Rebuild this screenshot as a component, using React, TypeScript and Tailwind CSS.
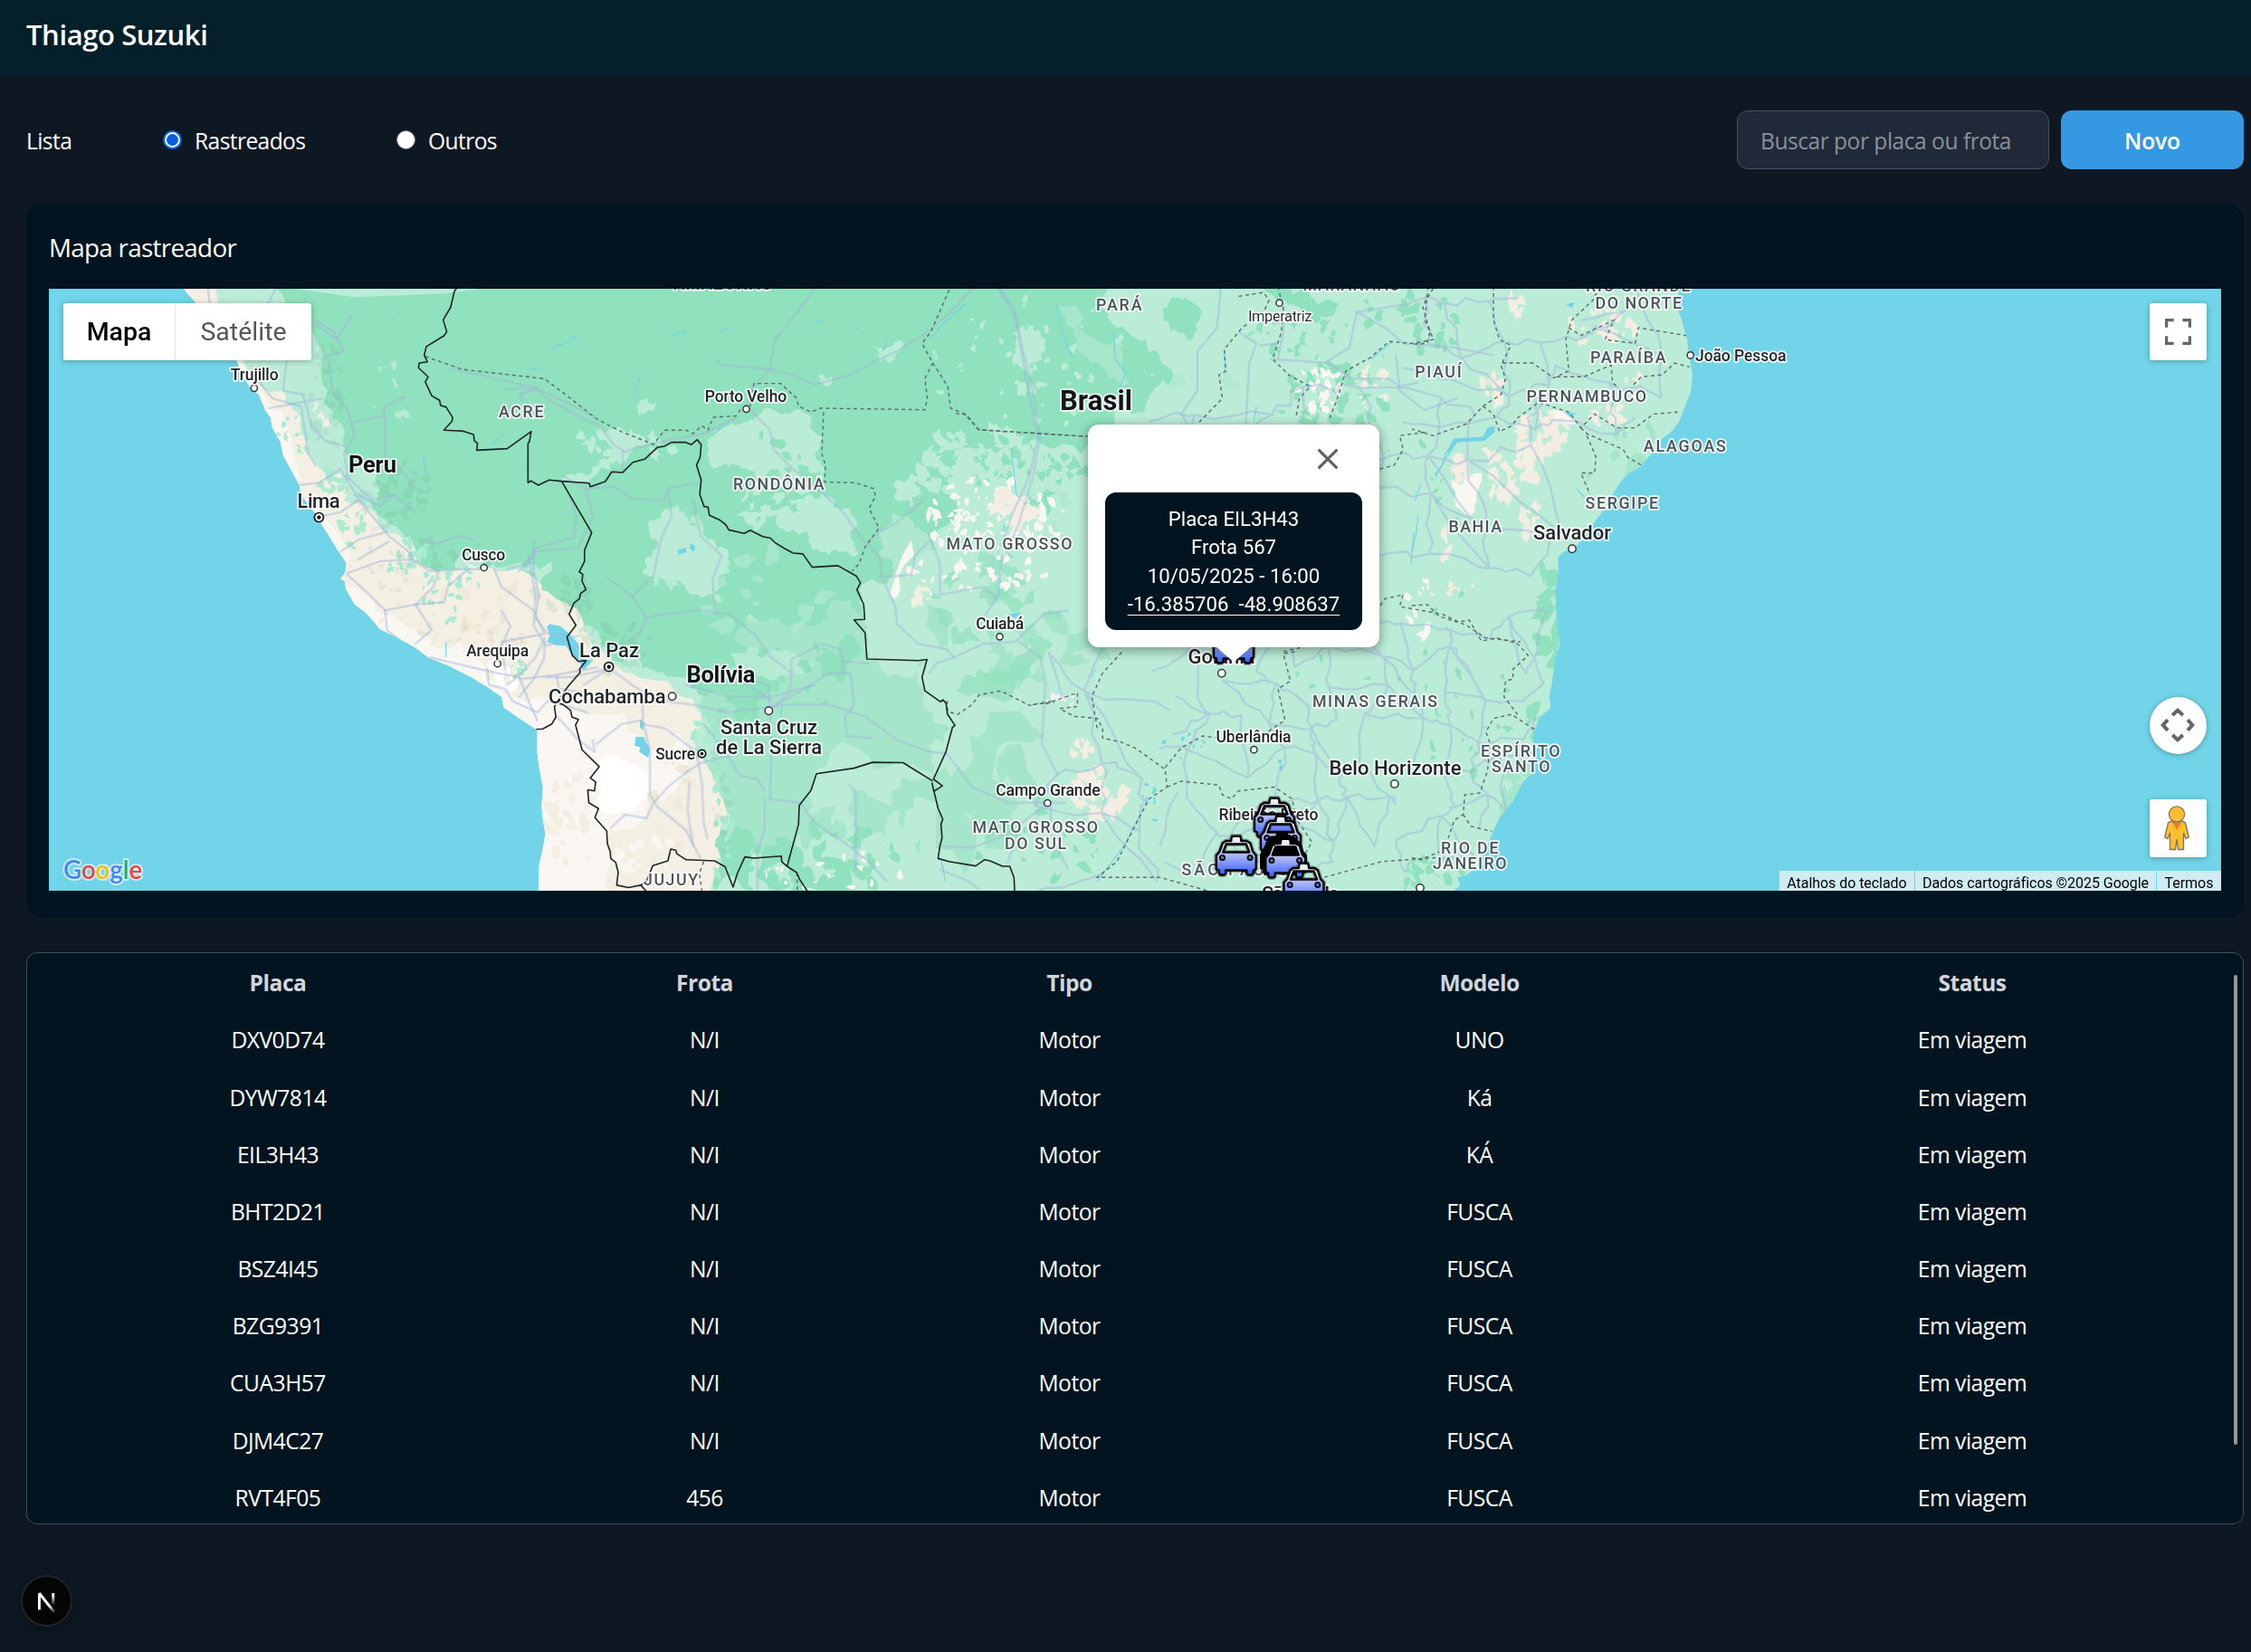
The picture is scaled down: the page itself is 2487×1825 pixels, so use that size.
import React from "react";

/* ---------- deterministic terrain helpers ---------- */

function rng(seed: number) {
  let s = seed * 7919 + 17;
  return () => {
    s = (s * 1664525 + 1013904223) % 4294967296;
    return s / 4294967296;
  };
}

/** Irregular patches scattered in an ellipse. */
function patches(cx: number, cy: number, rx: number, ry: number, n: number, size: number, seed: number) {
  const r = rng(seed);
  r();
  let d = "";
  for (let i = 0; i < n; i++) {
    const a = r() * Math.PI * 2;
    const q = Math.sqrt(r());
    const x = cx + Math.cos(a) * rx * q;
    const y = cy + Math.sin(a) * ry * q;
    const s = size * (0.35 + r() * 0.9);
    const k = 7 + Math.floor(r() * 5);
    const tilt = r() * Math.PI;
    for (let j = 0; j < k; j++) {
      const t = (j / k) * Math.PI * 2;
      const m = s * (0.35 + r() * 0.8);
      const px = Math.cos(t) * m;
      const py = Math.sin(t) * m * 0.6;
      const X = x + px * Math.cos(tilt) - py * Math.sin(tilt);
      const Y = y + px * Math.sin(tilt) + py * Math.cos(tilt);
      d += `${j ? "L" : "M"}${X.toFixed(1)} ${Y.toFixed(1)}`;
    }
    d += "Z";
  }
  return d;
}

/** Closed outline whose edges are broken up by midpoint displacement. */
function rough(points: string, seed: number, depth = 3, amp = 0.34) {
  const r = rng(seed);
  r();
  let pts = points.split(" ").map((p) => p.split(",").map(Number));
  for (let k = 0; k < depth; k++) {
    const next: number[][] = [];
    for (let i = 0; i < pts.length; i++) {
      const a = pts[i];
      const b = pts[(i + 1) % pts.length];
      const dx = b[0] - a[0];
      const dy = b[1] - a[1];
      const o = (r() - 0.5) * amp * 2;
      next.push(a);
      const len = Math.hypot(dx, dy);
      const lim = len > 160 ? 160 / len : 1;
      if (len > 10) next.push([(a[0] + b[0]) / 2 - dy * o * lim, (a[1] + b[1]) / 2 + dx * o * lim]);
    }
    pts = next;
  }
  return "M" + pts.map((p) => `${p[0].toFixed(1)} ${p[1].toFixed(1)}`).join("L") + "Z";
}

/** Loose road mesh over a rectangle. */
function mesh(x0: number, y0: number, x1: number, y1: number, step: number, seed: number) {
  const r = rng(seed);
  const cols = Math.floor((x1 - x0) / step) + 1;
  const rows = Math.floor((y1 - y0) / step) + 1;
  const pts: number[][][] = [];
  for (let j = 0; j < rows; j++) {
    const row: number[][] = [];
    for (let i = 0; i < cols; i++) {
      row.push([x0 + i * step + (r() - 0.5) * step * 0.9, y0 + j * step + (r() - 0.5) * step * 0.9]);
    }
    pts.push(row);
  }
  let d = "";
  const link = (a: number[], b: number[]) => {
    d += `M${a[0].toFixed(1)} ${a[1].toFixed(1)}`;
    for (const t of [0.28, 0.52, 0.76]) {
      const mx = a[0] + (b[0] - a[0]) * t + (r() - 0.5) * step * 0.2;
      const my = a[1] + (b[1] - a[1]) * t + (r() - 0.5) * step * 0.2;
      d += `L${mx.toFixed(1)} ${my.toFixed(1)}`;
    }
    d += `L${b[0].toFixed(1)} ${b[1].toFixed(1)}`;
  };
  for (let j = 0; j < rows; j++) {
    for (let i = 0; i < cols; i++) {
      if (i + 1 < cols && r() < 0.72) link(pts[j][i], pts[j][i + 1]);
      if (j + 1 < rows && r() < 0.72) link(pts[j][i], pts[j + 1][i]);
      if (i + 1 < cols && j + 1 < rows && r() < 0.16) link(pts[j][i], pts[j + 1][i + 1]);
    }
  }
  return d;
}

/* Map sheets: each one has its own local grid. */
const SHEET_W = "translate(40 310) scale(0.39541 0.43367)";
const SHEET_C = "translate(560 310) scale(0.39541 0.43367)";
const SHEET_E = "translate(1060 310) scale(0.39541 0.43367)";
const SHEET_X = "translate(1560 310) scale(0.33333 0.43367)";

const LAND_W =
  "414,21 418,30 440,50 470,100 520,170 560,203 575,240 600,275 622,290 640,330 655,350 660,375 682,410 690,445 705,470 735,520 740,545 760,570 790,605 800,625 815,645 845,690 866,718 864,742 850,760 862,765 865,785 890,825 920,845 940,865 960,888 1000,905 1060,935 1095,960 1150,980 1215,1010 1260,1035 1300,1060 1306,1087 1350,1115 1400,1145 1400,1200 1405,1240 1416,1290 1412,1340 1417,1380 1423,1410 1415,1450 1405,1490 1403,1560 1600,1560 1600,15 414,15";
const LAND_X =
  "-20,15 885,15 880,70 892,95 905,130 912,150 918,190 930,240 925,280 905,320 885,360 860,385 830,402 800,435 758,473 715,492 690,515 660,550 640,580 600,620 570,655 540,680 500,692 484,705 486,740 475,790 477,830 480,880 491,922 475,960 465,1020 455,1060 460,1088 425,1112 408,1142 400,1170 402,1220 405,1250 365,1280 335,1325 290,1368 265,1410 250,1440 220,1490 180,1515 150,1520 160,1540 130,1560 -20,1560";

const BORDERS_C = [
  "-137,15 -147,28 -157,68 -178,100 -168,130 -175,140 -225,168 -231,190 -222,207 -245,210 -247,222 -220,245 -228,258 -210,293 -188,305 -185,318 -170,322 -152,348 -153,358 -176,381 -125,383 -93,392 -91,408 -82,414 -84,432 1,428 68,384 63,410 59,415 59,515 67,510 88,521 118,508 153,511 230,516 233,525 275,512 293,487 323,489 352,463 385,455 420,425 440,422 460,412 500,412 515,418 532,405 543,418 540,450 530,470 543,508 539,545 551,575 562,577 566,598 595,610 612,622 620,635 663,644 680,636 715,652 737,656 750,668 775,682 800,694 827,696 853,730 925,726 977,753 988,770 978,787 997,825 1000,863 970,864 1001,897 1006,964 1150,968 1174,965 1160,1010 1168,1045 1212,1073 1218,1068 1227,1076 1231,1104 1252,1133 1245,1138 1227,1200 1192,1270 1217,1287 1193,1301 1188,1280 1205,1345 1210,1355 1218,1372 1213,1385 1216,1420 1210,1440 1205,1472 1235,1480 1310,1491 1335,1475 1350,1478 1385,1492 1405,1492 1417,1520 1419,1560",
  "153,511 237,642 217,687 217,715 202,742 212,748 210,765 221,787 206,797 203,810 187,822 174,850 193,878 168,908 183,955 200,970 222,968 203,990 205,998 170,1035 158,1050 133,1085 137,1112 125,1130 100,1142 80,1143",
  "140,1075 158,1080 178,1095 182,1112 200,1118 192,1132 210,1195 258,1238 233,1267 248,1277 245,1300 226,1297 229,1330 256,1345 246,1368 279,1402 281,1435 289,1455 290,1472 304,1482 311,1507 307,1540 340,1546 374,1540 390,1530 408,1490 450,1478 458,1448 472,1451 475,1460 500,1475 580,1478 610,1493 615,1505 632,1545 645,1508 665,1468 690,1471 767,1466 768,1480 783,1492 815,1385 817,1337 850,1298 865,1256 970,1242 1022,1227 1107,1228 1190,1275",
  "783,1492 810,1508 818,1525 840,1556",
  "374,1540 390,1556",
];

const STATES_C = [
  "-228,193 -125,226 105,250 175,298 250,352 320,385 410,417 440,381 500,381 520,390 545,370 562,381 577,348 640,345 655,325 680,320 690,262 765,262 810,300 815,320 850,335 875,325 1168,329 1175,300 1168,250 1190,210 1160,160 1185,130 1240,15",
  "885,335 880,440 890,470 888,513 975,515 1025,530 1030,550 1012,580 1040,630 1000,680 985,720 965,740",
  "1190,210 1232,270 1240,325 1280,340 1318,380 1620,397",
  "1230,1070 1232,1098 1260,1105 1300,1080 1320,1055 1380,1045 1460,1082 1530,1070",
  "550,1480 538,1510 545,1556",
  "810,1508 812,1556",
];
const STATES_E = [
  "-10,338 20,342 55,380 360,397",
  "240,1078 330,1050 330,1085 280,1090 320,1110 385,1115 400,1140 400,1165 450,1175 490,1190 575,1245 580,1290 530,1320 490,1390 440,1480 385,1520 560,1520 700,1556",
  "205,1080 265,1074",
  "385,1140 370,1060 400,1000 460,940",
  "575,1240 620,1190 680,1160 760,1170 860,1150 910,1120 890,1040 925,1020 905,950 940,945",
  "580,1290 620,1275 725,1285 735,1310 760,1320 780,1300 880,1290 930,1320 940,1370 985,1430 960,1470",
  "890,15 905,70 900,130 875,200 920,240 980,270 950,300 940,350",
  "780,40 850,30 865,50 850,80 790,120 740,175 745,230 725,240 735,300 665,365",
  "1310,15 1300,100 1325,150 1270,160 1200,155 1150,195 1080,230 1060,290 1035,350",
  "1175,480 1215,470 1240,430 1230,395 1310,385",
  "905,945 1000,925 1090,890 1150,860 1190,810 1240,800 1230,830 1350,850 1420,880 1470,910 1568,920",
  "1020,1520 1180,1480 1330,1470",
];
const STATES_X = [
  "270,15 270,100 290,150 328,165 295,215 310,250 295,290 235,320 180,365 70,395 0,378",
  "70,20 35,65 60,130 50,160 0,162",
  "300,210 400,210 470,248 520,230 510,150 530,100 600,50 620,20",
  "235,320 270,340 290,385 330,370 350,350 420,310 520,335 560,375 605,340 680,375 740,375 800,340 880,335",
  "520,120 560,140 670,100 640,150 740,160 750,120 910,140",
  "480,245 570,245 660,215 665,260 680,270",
  "735,265 760,245 830,240 870,210 920,220",
  "560,375 580,390 700,430 715,450 760,470",
  "580,395 610,450 605,490 560,490 590,545",
  "0,828 50,825 90,855 150,870 190,865 230,918 280,910 350,925 385,955 335,990 335,1015 310,1020 305,1060 350,1105",
  "405,1143 330,1105 270,1115 245,1150 260,1180 250,1250 225,1305 175,1310 170,1360 140,1375 120,1420",
  "170,1360 195,1390 265,1403",
  "0,1470 30,1475 90,1455",
];

const ROADS_W = [
  "480,21 485,60 550,80 640,70 670,21",
  "780,100 830,130 860,180 815,190 830,290 870,330 890,395 860,440 870,500 940,560 1000,545",
  "880,90 840,150 780,110",
  "890,360 970,345 975,320 1030,295",
  "975,345 975,450 1010,470 1060,530",
  "615,250 660,300 740,320 760,440 780,470",
  "700,200 690,280 745,290 770,370 810,410 860,420",
  "650,325 740,310 800,300",
  "740,520 790,515 850,480 890,540 960,575 1000,545 1060,590",
  "890,545 930,590 985,650 1040,690 1060,720",
  "800,600 850,590 900,560",
  "850,690 900,660 980,640",
  "870,745 960,715 1050,710 1100,740 1180,735 1240,735",
  "900,710 985,665",
  "870,750 920,790 975,840 980,890 1030,925",
  "975,840 1060,825 1110,780 1125,740",
  "1060,825 1105,890 1060,925",
  "1060,825 1140,820 1150,780 1200,740",
  "1280,735 1300,780 1390,840 1420,900 1300,920 1310,990",
  "1390,660 1390,740 1405,800 1395,860 1430,900 1480,905",
  "1300,840 1325,880 1300,930",
  "1080,660 1120,670 1180,650 1220,660",
  "1100,960 1240,990 1290,1000 1350,1010 1380,1080 1400,1120",
  "1260,990 1265,1030 1310,1040 1330,1070 1400,1100 1430,1070 1540,1100",
  "1350,1015 1450,1005 1568,985",
  "1420,910 1420,960 1390,1015 1350,1060",
  "1350,740 1400,680 1500,655 1510,600 1490,550",
  "1160,225 1240,240 1400,275 1480,310 1568,350",
  "1400,275 1350,290 1360,305",
  "1455,1008 1460,1040 1530,1050",
];
const ROADS_C = [
  "860,21 820,70 750,150 735,225 690,270 670,320",
  "590,205 600,215 730,225 800,240 860,265 960,240 1030,205 1090,180 1170,135 1240,80 1300,21",
  "0,275 80,275 120,305 200,345 260,370 300,420 330,435 430,410 550,390 640,350",
  "325,435 322,480 290,490",
  "680,330 735,380 745,430 800,480 880,540 940,590 985,650 1040,700 1050,760 1085,830 1090,875 1150,925 1230,940 1250,960 1330,925 1420,920 1500,850 1568,840",
  "1380,21 1420,80 1440,170 1470,280 1490,400 1470,500 1430,620 1380,720 1375,800 1330,860",
  "1160,560 1085,620 1040,640 1015,660",
  "1185,660 1140,700 1130,750 1040,755",
  "1185,660 1210,720 1210,800 1330,780 1370,810",
  "160,500 220,530 300,525 350,555 440,560 450,530 530,515",
  "220,530 240,600 200,680 80,690 60,720 0,735",
  "450,530 460,600 430,660 410,750 350,805 280,755",
  "350,805 390,860 440,850 540,840 620,850 690,900 740,960 795,1000 790,1050 740,1090",
  "520,560 540,650 600,700 575,760 580,840",
  "390,860 370,900 340,915",
  "60,700 80,800 75,880 110,930 200,905",
  "290,990 350,1030 400,1060 470,1075 520,1080 610,1100 700,1090 780,1080 900,1080 1000,1110 1090,1170 1180,1200 1230,1205",
  "650,1010 730,1030 735,1090 740,1180 735,1320",
  "735,1090 830,1040 900,1000 960,1000 970,1080 945,1110 950,1160 1020,1165",
  "795,1000 795,965 880,925 935,940 940,1000",
  "735,1320 820,1330 860,1380 940,1430 1010,1480 1060,1530",
  "955,1285 975,1300 975,1500",
  "1010,975 940,970",
  "700,1553 700,1450 720,1400 720,1320",
  "380,1080 380,1120 400,1200 400,1310 420,1340 500,1400 540,1470",
  "380,1130 440,1140 530,1200 545,1280 550,1380 560,1420",
  "290,1395 330,1360 390,1370 410,1330 450,1290 505,1250",
  "250,1180 320,1130 375,1120",
  "140,1110 200,1170 245,1200 240,1170",
  "505,1250 540,1230 620,1210",
  "550,1130 610,1200 650,1260 700,1270 720,1300",
  "110,1010 180,1010 280,990 215,1030",
  "100,920 80,960 30,1010 0,1030",
  "640,1010 740,1070",
  "500,1030 620,1060 740,1060 860,1030",
  "510,1280 505,1350 520,1440",
  "1230,1205 1300,1290 1400,1330 1560,1330",
  "1250,960 1200,975 1180,1000",
  "1430,920 1490,960 1505,1020 1495,1180 1540,1260",
  "1500,1340 1440,1380 1400,1480",
  "1520,1340 1520,1410 1568,1500",
  "1210,1440 1300,1445 1400,1410",
  "1210,1500 1290,1530 1320,1553",
];
const ROADS_E = [
  "110,21 155,90 175,190 195,290 220,400 195,500 150,590 110,690",
  "730,21 720,120 665,180 665,280 620,340 640,370",
  "780,130 830,160 810,210 800,370",
  "870,200 960,205 1020,210 1090,170 1110,80 1250,60 1310,40",
  "905,70 905,130 890,200",
  "1110,80 1190,120 1240,160 1380,170 1490,190",
  "1030,210 1100,250 1200,250 1230,270 1280,260",
  "1220,190 1230,280 1300,330 1390,300",
  "840,165 890,160",
];

const WATER_C = [
  "120,875 150,880 175,900 200,925 212,960 200,965 182,955 165,930 140,930 112,920 120,905 112,880",
  "205,962 240,968 215,992 207,985",
  "360,1162 382,1162 400,1195 395,1215 370,1200 372,1188 357,1185",
  "372,1118 384,1125 380,1145 372,1138",
  "478,685 500,680 502,692 480,698",
  "515,668 527,678 522,690 510,682",
  "1400,850 1440,845 1420,860",
];

type Label = [string, number, number, number, number, string];
/* text, left, width, baseline, size, kind */
const LABELS: Label[] = [
  ["Trujillo", 254.7, 53, 420.4, 17.6, "city"],
  ["Cusco", 510.2, 48, 619, 17.6, "city"],
  ["Arequipa", 515.2, 69, 725.2, 17.6, "city"],
  ["Porto Velho", 778.7, 90.5, 443.6, 17.6, "city"],
  ["Sucre", 724.2, 44, 839, 17.6, "city"],
  ["Cuiabá", 1078.2, 53, 695.3, 17.6, "city"],
  ["Campo Grande", 1100.2, 115.5, 879.2, 17.6, "city"],
  ["Uberlândia", 1343.5, 83, 820.2, 17.6, "city"],
  ["Ribeirão Preto", 1346.5, 110, 906.4, 17.6, "city"],
  ["João Pessoa", 1873, 100.5, 399, 17.6, "city"],
  ["Imperatriz", 1379, 70.5, 355, 16.6, "town"],
  ["Lima", 328.5, 47, 561.4, 22, "city"],
  ["La Paz", 640, 66, 726.2, 22, "city"],
  ["Cochabamba", 606, 129.5, 777.4, 22, "city"],
  ["Santa Cruz", 796, 107, 810.7, 22, "city"],
  ["de La Sierra", 791, 117, 832.8, 22, "city"],
  ["Goiânia", 1312.5, 74, 733.2, 22, "city"],
  ["Belo Horizonte", 1468.5, 146, 856.2, 22, "city"],
  ["Salvador", 1694, 86, 596.1, 22, "city"],
  ["São Paulo", 1394, 86, 995, 22, "city"],
  ["Peru", 385, 53, 521.6, 25.5, "country"],
  ["Bolívia", 758.5, 76, 754, 25.5, "country"],
  ["Brasil", 1171, 80, 453, 31, "country"],
  ["ACRE", 551, 49.5, 461.2, 17.8, "state"],
  ["AMAZONAS", 744.5, 107.5, 320.4, 17.8, "state"],
  ["RONDÔNIA", 810, 100.5, 541, 17.8, "state"],
  ["MATO GROSSO", 1045.5, 139, 606.5, 17.8, "state"],
  ["JUJUY", 711, 60, 977.6, 17.8, "state"],
  ["MATO GROSSO", 1074.5, 138.5, 920.4, 17.8, "state"],
  ["DO SUL", 1110, 68, 937.8, 17.8, "state"],
  ["PARÁ", 1211, 50.5, 342.8, 17.8, "state"],
  ["MARANHÃO", 1439.5, 107.5, 320.6, 17.8, "state"],
  ["PIAUÍ", 1563.2, 51.5, 417.4, 17.8, "state"],
  ["BAHIA", 1600.5, 58.5, 588, 17.8, "state"],
  ["MINAS GERAIS", 1450, 138, 781, 17.8, "state"],
  ["SÃO PAULO", 1305.5, 118.5, 967.3, 17.8, "state"],
  ["RIO GRANDE", 1752, 115.5, 322, 17.8, "state"],
  ["DO NORTE", 1762.5, 95.5, 340.8, 17.8, "state"],
  ["PARAÍBA", 1757, 83.5, 401.4, 17.8, "state"],
  ["PERNAMBUCO", 1686.5, 132.5, 444, 17.8, "state"],
  ["ALAGOAS", 1815.8, 91, 499.4, 17.8, "state"],
  ["SERGIPE", 1751.5, 80.5, 562.4, 17.8, "state"],
  ["ESPÍRITO", 1636, 87.5, 836.4, 17.8, "state"],
  ["SANTO", 1648, 64.5, 853.4, 17.8, "state"],
  ["RIO DE", 1592, 63.5, 942.6, 17.8, "state"],
  ["JANEIRO", 1583, 81.5, 960.4, 17.8, "state"],
];

const LABEL_CLASS: Record<string, string> = {
  city: "fill-[#1f2226] font-medium",
  town: "fill-[#2b2e32] font-normal",
  country: "fill-[#121417] font-bold",
  state: "fill-[#4b5358] font-medium",
};

const DOTS: [number, number, number][] = [
  [280.8, 428.8, 3.6], [534.7, 627, 3.6], [549.7, 733.2, 3.6], [824.5, 451.8, 3.6],
  [742.7, 769.2, 4.2], [849.4, 785.3, 4.2], [1104.5, 703.3, 3.6], [1157.3, 887.2, 3.6],
  [1413.5, 334.7, 3.6], [1349.8, 743.7, 4.2], [1385.4, 828.2, 3.6], [1540.8, 866, 4.2],
  [1867.7, 392.4, 3.6], [1737, 606.2, 4.2], [1569, 981, 4.2],
];
const CAPITALS: [number, number, number][] = [[352.4, 571.5, 5], [672.7, 736.7, 5], [775.5, 832.6, 4.2]];

function Lines({ list, ...rest }: { list: string[] } & React.SVGProps<SVGPolylineElement>) {
  return (
    <>
      {list.map((p, i) => (
        <polyline key={i} points={p} fill="none" vectorEffect="non-scaling-stroke" {...rest} />
      ))}
    </>
  );
}

const CAR_BODY =
  "M19 5 L20 1.8 H29 L30 5 V7 H36 L40 9.5 L43 19 L46.5 23 V38 L43.5 39.5 V42.5 L42 44.5 H37.5 L36 42.5 V39.5 H13 V42.5 L11.5 44.5 H7 L5.5 42.5 V39.5 L2.5 38 V23 L6 19 L9.5 9.5 L13 7 H19 Z";
const CAR_GLASS = "M13.5 10.5 H35.5 L39 19.5 H10 Z";

function Car({ x, y, glass, solid }: { x: number; y: number; glass?: boolean; solid?: boolean }) {
  if (solid)
    return <path transform={`translate(${x} ${y})`} d={CAR_BODY} fill="#000" stroke="#000" strokeWidth="3" strokeLinejoin="round" />;
  return (
    <g transform={`translate(${x} ${y})`}>
      <path d={CAR_BODY + CAR_GLASS} fill="none" stroke="#000" strokeOpacity="0.3" strokeWidth="5" strokeLinejoin="round" />
      <path d={CAR_BODY + CAR_GLASS} fillRule="evenodd" fill="url(#carPaint)" stroke="#000" strokeWidth="2.4" strokeLinejoin="round" />
      {glass && <path d={CAR_GLASS} fill="#000" />}
      <circle cx="9.2" cy="25.5" r="2.6" fill="#5b73b8" stroke="#000" strokeWidth="1.8" />
      <circle cx="39.8" cy="25.5" r="2.6" fill="#5b73b8" stroke="#000" strokeWidth="1.8" />
    </g>
  );
}

function MapCanvas() {
  return (
    <svg viewBox="54 319 2400 665" className="block h-full w-full" fontFamily="Roboto, sans-serif">
      <defs>
        <linearGradient id="carPaint" x1="0" y1="0" x2="0" y2="1">
          <stop offset="0" stopColor="#fbfaff" />
          <stop offset="0.4" stopColor="#c3c8f3" />
          <stop offset="0.75" stopColor="#6f8bf8" />
          <stop offset="1" stopColor="#2f5df0" />
        </linearGradient>
        <clipPath id="land">
          <polygon points={LAND_W} transform={SHEET_W} />
          <rect x="640" y="300" width="940" height="700" />
          <polygon points={LAND_X} transform={SHEET_X} />
        </clipPath>
      </defs>
      <rect x="54" y="319" width="2400" height="665" fill="#72d4e9" />
      <g clipPath="url(#land)">
        <rect x="54" y="319" width="2400" height="665" fill="#bbecd7" />

        {/* soft vegetation transitions */}
        <g fill="#a5e6ca">
          <path transform={SHEET_C} d={rough("560,860 1000,870 1010,965 1170,970 1165,1050 1240,1140 1190,1260 1100,1225 860,1250 810,1390 780,1480 600,1470 590,1300 560,1120", 19)} />
          <path transform={SHEET_C} d={patches(1000, 1380, 190, 100, 16, 60, 20)} />
          <path transform={SHEET_E} d={patches(60, 1260, 170, 190, 16, 90, 22)} />
          <path transform={SHEET_E} d={patches(160, 900, 260, 120, 16, 60, 23)} />
          <path transform={SHEET_E} d={patches(700, 500, 500, 300, 30, 40, 24)} opacity="0.5" />
          <path transform={SHEET_X} d={patches(700, 440, 160, 110, 16, 40, 25)} />
          <path transform={SHEET_X} d={patches(370, 1300, 60, 90, 12, 36, 27)} />
        </g>

        {/* rain forest */}
        <g transform={SHEET_W} fill="#90e1bd">
          <path d={rough("640,10 700,70 760,120 800,200 790,290 830,350 860,430 870,480 920,560 960,600 1020,640 1050,690 1100,740 1170,735 1220,690 1290,700 1340,730 1420,760 1500,800 1620,900 1640,0", 1, 2, 0.25)} />
        </g>
        <g transform={SHEET_C} fill="#90e1bd">
          <path d={rough("-60,0 1700,0 1700,140 1700,400 1500,420 1400,400 1330,420 1240,450 1220,520 1260,600 1150,700 1020,760 1000,860 900,830 860,880 740,860 640,900 560,1060 470,1010 400,990 330,960 260,930 200,880 170,820 -60,740", 2)} />
          <path d={rough("520,930 640,920 760,1040 700,1080 720,1150 640,1120 560,1060", 3)} />
          <path d={rough("860,960 950,900 990,960 940,1020 880,1010", 4)} />
          <path d={rough("590,1400 680,1400 690,1553 580,1553", 5)} />
          <path d={patches(880, 1480, 230, 80, 45, 40, 5)} />
          <path d={patches(1350, 820, 190, 150, 18, 40, 6)} opacity="0.7" />
        </g>
        <g transform={SHEET_E} fill="#90e1bd">
          <path d={rough("-60,0 320,0 380,40 330,70 360,110 470,130 560,190 590,260 530,300 420,320 330,370 250,380 200,420 100,430 -60,420", 7)} />
          <path d={rough("570,70 620,50 670,100 650,150 590,130", 8)} />
          <path d={rough("-20,1040 60,990 140,1000 230,900 260,930 200,1000 60,1060", 9)} opacity="0.7" />
          <path d={rough("850,21 930,60 1000,110 1060,60 960,21", 10)} />
          <path d={patches(180, 480, 170, 110, 44, 32, 8)} />
          <path d={patches(1050, 120, 240, 90, 26, 20, 9)} />
          <path d={patches(1060, 320, 180, 110, 40, 24, 10)} />
          <path d={patches(1090, 700, 320, 420, 44, 13, 11)} />
          <path d={patches(230, 1440, 190, 90, 16, 22, 12)} />
        </g>
        <g transform={SHEET_X} fill="#90e1bd">
          <path d={patches(450, 860, 40, 150, 18, 38, 13)} />
          <path d={patches(410, 1120, 26, 50, 8, 32, 14)} />
          <path d={patches(180, 1080, 160, 190, 20, 18, 15)} />
          <path d={patches(60, 1510, 110, 40, 18, 22, 16)} />
          <path d={patches(60, 100, 100, 90, 12, 30, 17)} />
        </g>

        {/* clearings in the forest */}
        <g fill="#bbecd7">
          <g transform={SHEET_C}>
            <path d={rough("570,400 640,370 700,345 790,340 850,360 860,440 870,490 780,470 720,500 640,470 560,440", 30)} />
            <path d={rough("640,600 720,570 800,560 880,540 960,580 960,650 980,700 900,700 840,640 760,630", 31)} />
            <path d={rough("400,610 440,580 500,600 560,660 620,700 590,760 600,820 520,800 450,760 380,750 420,680", 32)} />
            <path d={rough("620,950 720,960 800,950 860,980 780,1010 700,1010", 33)} opacity="0.8" />
            <path d={rough("150,500 230,495 290,450 260,400 340,400 420,410 330,450 290,480 230,515", 34)} />
            <path d={rough("1080,520 1130,490 1160,540 1130,580 1090,560", 35)} />
            <path d={rough("1060,625 1120,600 1170,640 1160,720 1080,740 1040,690", 36)} opacity="0.7" />
            <path d={rough("1440,120 1490,130 1470,210 1430,220 1420,160", 37)} />
            <path d={rough("1020,170 1060,172 1110,160 1090,185 1040,205", 38)} />
            <path d={rough("870,240 915,240 900,268 875,260", 39)} />
            <path d={rough("360,320 425,310 410,335 370,345", 40)} />
            <path d={patches(500, 690, 120, 110, 30, 32, 30)} opacity="0.8" />
            <path d={patches(700, 800, 190, 110, 20, 34, 31)} opacity="0.5" />
            <path d={patches(1330, 470, 210, 90, 64, 32, 32)} />
            <path d={patches(750, 480, 140, 110, 30, 28, 33)} />
            <path d={patches(330, 410, 150, 40, 16, 24, 34)} />
            <path d={patches(1350, 240, 220, 160, 14, 14, 35)} />
          </g>
          <g transform={SHEET_E}>
            <path d={rough("280,60 330,70 460,160 480,260 420,250 330,150", 41)} opacity="0.5" />
            <path d={patches(330, 230, 230, 160, 30, 17, 36)} />
            <path d={patches(180, 170, 26, 130, 16, 20, 37)} />
          </g>
          <g transform={SHEET_W}>
            <path d={rough("690,210 760,240 800,320 850,440 830,500 780,470 740,360 700,310", 42)} />
            <path d={rough("955,220 1005,195 1000,230 960,238", 43)} opacity="0.8" />
            <path d={patches(900, 520, 50, 60, 10, 40, 38)} />
            <path d={patches(1340, 745, 100, 20, 12, 34, 39)} />
            <path d={patches(1000, 300, 60, 60, 5, 18, 40)} opacity="0.8" />
          </g>
        </g>
        <g fill="#90e1bd" transform={SHEET_C}>
          <path d={patches(720, 520, 150, 130, 14, 22, 44)} />
          <path d={patches(1400, 440, 150, 60, 16, 18, 45)} />
          <path d={patches(820, 1010, 260, 90, 20, 18, 46)} />
        </g>

        {/* dry highlands */}
        <g transform={SHEET_W} fill="#f3efe3">
          <polygon points="400,10 500,10 510,60 450,60" />
          <path d={rough("300,190 540,190 620,262 690,280 695,310 740,350 750,400 775,460 850,490 860,560 945,590 980,640 1040,655 1060,700 1120,740 1200,720 1290,740 1400,765 1440,800 1510,835 1525,890 1555,930 1605,955 1665,1000 1765,1020 1835,1065 1860,1110 1835,1150 1875,1240 1905,1300 1915,1380 1895,1440 1915,1480 1890,1600 300,1600", 50, 2, 0.22)} />
          <path d={patches(780, 400, 40, 100, 8, 16, 41)} />
        </g>
        <g transform={SHEET_W} fill="#faf7f2">
          <polygon points="500,190 575,200 620,275 660,320 690,340 715,410 725,460 740,510 700,510 600,320" />
          <polygon points="730,520 760,560 800,600 830,630 850,650 880,700 870,722 800,640" />
          <path d={rough("700,755 850,755 900,790 950,840 990,850 1060,890 1110,930 1180,920 1240,970 1260,1020 1320,1040 1370,1075 1440,1060 1500,1090 1480,1130 1400,1145 1300,1190 1000,1010", 51, 2, 0.2)} />
          <path d={patches(1300, 1010, 60, 26, 8, 26, 42)} fill="#fff" />
        </g>
        <g transform={SHEET_C}>
          <path fill="#faf7f2" d={rough("60,1145 110,1130 150,1090 230,1110 330,1100 350,1150 420,1200 430,1280 390,1350 330,1400 280,1400 290,1480 300,1600 60,1600", 52, 2, 0.22)} />
          <path fill="#faf7f2" d={rough("440,1130 500,1170 480,1280 440,1330 400,1300", 53)} />
          <path fill="#ffffff" d={rough("270,1218 300,1210 330,1222 370,1240 395,1275 400,1305 370,1330 345,1355 300,1360 265,1350 245,1330 262,1290 258,1250", 54, 2, 0.2)} />
          <path fill="#f3efe3" d={patches(180, 1380, 70, 150, 26, 24, 43)} />
          <path fill="#efe9d9" d={patches(470, 1350, 80, 130, 16, 22, 44)} />
          <path fill="#efe9d9" d={patches(-100, 850, 260, 90, 18, 22, 45)} />
          <path fill="#faf7f2" d={patches(400, 1480, 100, 60, 14, 26, 46)} />
        </g>
        <g fill="#a9ead0">
          <path transform={SHEET_W} d={patches(1160, 790, 90, 80, 26, 17, 47)} />
          <path transform={SHEET_W} d={patches(720, 370, 50, 100, 14, 13, 48)} />
          <path transform={SHEET_W} d={patches(830, 520, 50, 30, 12, 20, 49)} />
          <path transform={SHEET_W} d={patches(880, 630, 40, 50, 12, 16, 50)} />
          <path transform={SHEET_W} d={patches(980, 750, 60, 30, 7, 11, 51)} />
          <path transform={SHEET_W} d={patches(1340, 985, 36, 24, 6, 13, 52)} />
          <path transform={SHEET_W} d={patches(1060, 700, 60, 40, 12, 20, 57)} />
          <path transform={SHEET_C} d={patches(540, 1150, 40, 80, 16, 16, 53)} />
          <path transform={SHEET_C} d={patches(600, 1400, 30, 140, 20, 18, 54)} />
        </g>
        {/* ridge shading */}
        <g fill="#5f9f86" opacity="0.14">
          <path transform={SHEET_W} d={patches(810, 300, 45, 150, 34, 19, 55)} />
          <path transform={SHEET_W} d={patches(980, 540, 120, 90, 34, 19, 56)} />
          <path transform={SHEET_W} d={patches(1150, 700, 160, 40, 20, 18, 57)} />
          <path transform={SHEET_W} d={patches(1480, 800, 90, 50, 26, 20, 58)} />
          <path transform={SHEET_C} d={patches(300, 930, 110, 70, 34, 19, 59)} />
          <path transform={SHEET_C} d={patches(600, 1270, 30, 190, 26, 14, 60)} />
        </g>
        <g fill="#a89f86" opacity="0.13">
          <path transform={SHEET_W} d={patches(960, 720, 90, 90, 20, 14, 61)} />
          <path transform={SHEET_W} d={patches(1230, 900, 180, 50, 24, 14, 62)} />
        </g>

        {/* bare farmland */}
        <g fill="#faf6f1">
          <path transform={SHEET_C} d={patches(1400, 610, 170, 80, 46, 17, 61)} />
          <path transform={SHEET_C} d={patches(1310, 740, 210, 45, 30, 17, 62)} />
          <polygon transform={SHEET_C} points="1130,660 1138,700 1110,725 1095,750 1100,790 1085,812 1070,800 1090,740 1105,700" />
          <path transform={SHEET_C} d={patches(1190, 600, 18, 60, 5, 16, 68)} />
          <path transform={SHEET_C} d={patches(950, 1510, 230, 50, 18, 16, 63)} />
          <path transform={SHEET_E} d={patches(80, 610, 170, 110, 46, 16, 64)} />
          <path transform={SHEET_E} d={patches(1010, 275, 70, 60, 28, 17, 65)} />
          <path transform={SHEET_E} d={patches(285, 1070, 40, 20, 6, 15, 66)} />
          <path transform={SHEET_E} d={patches(1290, 820, 40, 90, 10, 14, 67)} />
          <path transform={SHEET_X} d={rough("130,510 165,520 180,495 230,490 225,520 215,560 190,600 165,585 145,575 145,540", 69, 2, 0.2)} />
          <polygon transform={SHEET_X} points="455,330 500,332 520,345 550,365 500,368 465,350" />
          <polygon transform={SHEET_X} points="45,870 62,870 60,895 42,918 30,920" />
        </g>
        <g fill="#f4eee2">
          <path transform={SHEET_C} d={patches(1410, 600, 60, 60, 12, 30, 70)} />
          <path transform={SHEET_C} d={patches(1150, 800, 36, 18, 9, 19, 71)} />
          <path transform={SHEET_E} d={patches(150, 590, 45, 60, 12, 26, 72)} />
          <path transform={SHEET_E} d={patches(400, 1300, 80, 65, 30, 26, 73)} />
          <path transform={SHEET_E} d={patches(340, 1190, 40, 25, 8, 20, 74)} />
          <path transform={SHEET_E} d={patches(1150, 280, 50, 60, 12, 20, 75)} />
          <path transform={SHEET_X} d={patches(430, 390, 100, 60, 36, 29, 76)} />
          <path transform={SHEET_X} d={patches(320, 480, 100, 75, 28, 28, 77)} />
          <path transform={SHEET_X} d={patches(265, 275, 40, 32, 9, 28, 78)} />
          <path transform={SHEET_X} d={patches(620, 120, 130, 45, 24, 22, 79)} />
          <path transform={SHEET_X} d={patches(660, 345, 60, 35, 12, 22, 80)} />
          <path transform={SHEET_X} d={patches(390, 600, 40, 50, 10, 26, 81)} />
          <path transform={SHEET_X} d={patches(150, 480, 45, 25, 9, 26, 82)} />
          <path transform={SHEET_X} d={patches(110, 680, 22, 36, 5, 20, 83)} />
          <path transform={SHEET_X} d={patches(340, 60, 22, 36, 6, 24, 84)} />
          <path transform={SHEET_X} d={patches(735, 250, 30, 15, 5, 22, 85)} />
          <path transform={SHEET_X} d={patches(120, 780, 100, 26, 7, 15, 86)} />
        </g>

        {/* lakes and rivers */}
        <g fill="#72d4e9">
          {WATER_C.map((p, i) => (
            <polygon key={i} points={p} transform={SHEET_C} />
          ))}
          <polygon transform={SHEET_X} points="140,402 235,398 250,375 275,370 275,385 240,408 150,412 125,440 112,438" />
          <polygon transform={SHEET_X} points="510,60 540,55 530,70" />
          <polygon transform={SHEET_X} points="505,335 545,338 525,348" />
          <path transform={SHEET_E} d={patches(640, 1180, 70, 40, 9, 10, 90)} />
          <path transform={SHEET_E} d={patches(560, 1330, 60, 60, 10, 9, 91)} />
          <path transform={SHEET_E} d={patches(890, 1230, 20, 14, 4, 9, 92)} />
        </g>
        <g stroke="#72d4e9" strokeWidth="1.2">
          <g transform={SHEET_X}>
            <Lines list={["112,438 100,470 75,495", "30,520 10,560", "20,600 15,640 0,690", "545,530 575,555"]} />
          </g>
          <g transform={SHEET_E}>
            <Lines list={["430,130 435,200 465,235 440,290", "740,185 742,235", "1380,420 1330,500", "1270,640 1262,720", "830,320 822,360", "510,1350 460,1440 385,1530", "270,60 290,140 315,195", "145,430 150,470 160,550", "380,990 370,1010", "1150,200 1210,155"]} />
          </g>
          <g transform={SHEET_C}>
            <Lines list={["1280,60 1220,110 1180,150", "1210,230 1232,270", "355,300 370,250", "460,140 500,130", "120,175 190,150", "600,130 625,120", "860,110 880,100", "1050,180 1065,150", "970,130 985,115", "1385,640 1392,620", "770,1080 765,1110", "1215,1480 1225,1530", "620,360 580,390"]} />
          </g>
          <g transform={SHEET_W}>
            <Lines list={["1270,420 1310,390", "1080,440 1092,500", "1380,225 1420,222", "990,98 1000,96", "1030,320 1040,325", "1490,147 1510,144", "1145,920 1145,960"]} />
          </g>
        </g>

        {/* roads */}
        <g stroke="#9fb4dc" strokeOpacity="0.45" strokeWidth="2.5" strokeLinejoin="round" strokeLinecap="round">
          <g transform={SHEET_W}><Lines list={ROADS_W} /></g>
          <g transform={SHEET_C}><Lines list={ROADS_C} /></g>
          <g transform={SHEET_E}><Lines list={ROADS_E} /></g>
          <path d={mesh(1290, 690, 1720, 990, 38, 3)} fill="none" />
          <path d={mesh(1270, 440, 1730, 680, 62, 4)} fill="none" />
          <path d={mesh(1560, 335, 1860, 470, 44, 9)} fill="none" />
          <path d={mesh(1150, 720, 1280, 980, 62, 6)} fill="none" />
        </g>

        {/* state limits */}
        <g stroke="#5c6a6a" strokeWidth="1.4" strokeDasharray="4 3.6">
          <g transform={SHEET_C}><Lines list={STATES_C} /></g>
          <g transform={SHEET_E}><Lines list={STATES_E} /></g>
          <g transform={SHEET_X}><Lines list={STATES_X} /></g>
        </g>
        {/* national borders */}
        <g transform={SHEET_C} stroke="#1d2426" strokeWidth="1.6" strokeLinejoin="round">
          <Lines list={BORDERS_C} />
        </g>
      </g>

      {DOTS.map(([x, y, r], i) => (
        <circle key={i} cx={x} cy={y} r={r} fill="#fff" stroke="#33383b" strokeWidth="1.5" />
      ))}
      {CAPITALS.map(([x, y, r], i) => (
        <g key={i}>
          <circle cx={x} cy={y} r={r} fill="#fff" stroke="#15181a" strokeWidth="1.7" />
          <circle cx={x} cy={y} r={r * 0.44} fill="#15181a" />
        </g>
      ))}
      {LABELS.map(([t, x, w, y, s, kind], i) => (
        <text
          key={i}
          x={x}
          y={y}
          fontSize={s}
          textLength={w}
          className={LABEL_CLASS[kind]}
          stroke="#ffffff"
          strokeOpacity="0.85"
          strokeWidth="3.6"
          strokeLinejoin="round"
          paintOrder="stroke"
        >
          {t}
        </text>
      ))}

      <Car x={1338.5} y={688} />
      <Car x={1383.5} y={880} />
      <Car x={1390.5} y={900} />
      <Car x={1341.3} y={922} />
      <Car x={1391} y={921} solid />
      <Car x={1392} y={918} solid />
      <Car x={1396} y={922} solid />
      <Car x={1395.8} y={925} glass />
      <Car x={1416} y={952} />
    </svg>
  );
}

function InfoWindow() {
  return (
    <div className="absolute left-[1148px] top-[150px] h-[246px] w-[322px] rounded-[12px] bg-white px-[19px] font-['Roboto',sans-serif] shadow-[0_3px_11px_2px_rgba(0,0,0,0.3)]">
      <div className="flex h-[75px] items-center justify-end pr-[26px]">
        <svg width="24" height="24" viewBox="0 0 24 24" className="block" stroke="#606060" strokeWidth="3">
          <path d="M1.6 1.6 22.4 22.4M22.4 1.6 1.6 22.4" />
        </svg>
      </div>
      <div className="flex h-[152px] flex-col items-center justify-center rounded-[12px] bg-[#02141f] pt-[1px] text-[22.2px] leading-[31.5px] tracking-[0px] text-white">
        <div>Placa EIL3H43</div>
        <div>Frota 567</div>
        <div>10/05/2025 - 16:00</div>
        <div className="whitespace-pre underline decoration-1 underline-offset-[4px]">-16.385706  -48.908637</div>
      </div>
      <svg width="40" height="18" viewBox="0 0 40 18" className="absolute left-[141px] top-[245px]">
        <path d="M0 0H40L20 17.5Z" fill="#fff" />
      </svg>
    </div>
  );
}

function TrackerMap() {
  return (
    <div className="relative h-[665px] w-[2400px] overflow-hidden font-['Roboto',sans-serif] tracking-normal">
      <MapCanvas />
      <InfoWindow />
      <div className="absolute left-4 top-4 flex h-[63px] rounded-[3px] bg-white pt-[2px] text-[28.5px] shadow-[0_1px_6px_rgba(0,0,0,0.3)]">
        <div className="flex w-[124px] items-center justify-center border-r border-[#e6e6e6] font-medium text-black">Mapa</div>
        <div className="flex w-[150px] items-center justify-center text-[#565656]">Satélite</div>
      </div>
      <div className="absolute right-4 top-4 flex h-[63px] w-[63px] items-center justify-center rounded-[3px] bg-white shadow-[0_1px_6px_rgba(0,0,0,0.3)]">
        <svg width="29" height="29" viewBox="0 0 18 18" fill="#666">
          <path d="M0 0v6h2V2h4V0H0zm16 0h-4v2h4v4h2V0h-2zm0 16h-4v2h6v-6h-2v4zM2 12H0v6h6v-2H2v-4z" />
        </svg>
      </div>
      <div className="absolute right-4 top-[451px] flex h-[63px] w-[63px] items-center justify-center rounded-full bg-white shadow-[0_1px_6px_rgba(0,0,0,0.3)]">
        <svg width="38" height="38" viewBox="0 0 38 38" fill="none" stroke="#666" strokeWidth="4" className="-ml-[1px] -mt-[1px]">
          <path d="M13.2 8 19 2.8 24.8 8M13.2 30 19 35.2 24.8 30M8 13.2 2.8 19 8 24.8M30 13.2 35.2 19 30 24.8" />
        </svg>
      </div>
      <div className="absolute right-4 top-[564px] flex h-[64px] w-[63px] items-center justify-center rounded-[3px] bg-white shadow-[0_1px_6px_rgba(0,0,0,0.3)]">
        <svg width="30" height="50" viewBox="0 0 30 50" className="-ml-[3px]">
          <path
            d="M8 17.5H22L24.5 19 28.3 35 25 36.5 22.5 30V48.5H16.5L15 37 13.5 48.5H7.5V30L5 36.5 1.7 35 5.5 19Z"
            fill="#fdbf2d"
            stroke="#7b7464"
            strokeWidth="1.3"
          />
          <path d="M9.5 17.5H20.5L15 27Z" fill="#e58031" />
          <circle cx="15" cy="9.5" r="8.6" fill="#fdbf2d" stroke="#7b7464" strokeWidth="1.3" />
        </svg>
      </div>
      <div className="absolute bottom-0 right-0 flex h-[22px] gap-px overflow-hidden text-[16px] leading-[27px] tracking-[-0.05px] text-black">
        <span className="w-[149px] bg-[#d0ebf1] text-center">Atalhos do teclado</span>
        <span className="w-[266px] bg-[#d0ebf1] text-center">Dados cartográficos ©2025 Google</span>
        <span className="w-[71px] bg-[#d0ebf1] text-center">Termos</span>
      </div>
      <svg width="100" height="40" viewBox="0 0 100 40" className="absolute bottom-0 left-[12px]">
        <text
          x="4"
          y="27"
          fontFamily="Lato, sans-serif"
          fontSize="29.5"
          fontWeight="600"
          textLength="87"
          lengthAdjust="spacingAndGlyphs"
          stroke="#d3f0f7"
          strokeWidth="3.6"
          strokeLinejoin="round"
          paintOrder="stroke"
        >
          <tspan fill="#4285f4">G</tspan>
          <tspan fill="#ea4335">o</tspan>
          <tspan fill="#fbbc04">o</tspan>
          <tspan fill="#4285f4">g</tspan>
          <tspan fill="#34a853">l</tspan>
          <tspan fill="#ea4335">e</tspan>
        </text>
      </svg>
    </div>
  );
}

function Radio({ checked, label }: { checked?: boolean; label: string }) {
  return (
    <div className="flex items-center">
      {checked ? (
        <span className="-mt-[4px] flex h-[21px] w-[21px] items-center justify-center rounded-full border-[2px] border-[#005fe0] bg-white">
          <span className="h-[13px] w-[13px] rounded-full bg-[#005fe0]" />
        </span>
      ) : (
        <span className="-mt-[4px] h-[21px] w-[21px] rounded-full border border-[#767676] bg-white" />
      )}
      <span className="ml-[14px]">{label}</span>
    </div>
  );
}

const ROWS = [
  ["DXV0D74", "N/I", "UNO"],
  ["DYW7814", "N/I", "Ká"],
  ["EIL3H43", "N/I", "KÁ"],
  ["BHT2D21", "N/I", "FUSCA"],
  ["BSZ4I45", "N/I", "FUSCA"],
  ["BZG9391", "N/I", "FUSCA"],
  ["CUA3H57", "N/I", "FUSCA"],
  ["DJM4C27", "N/I", "FUSCA"],
  ["RVT4F05", "456", "FUSCA"],
];

const ROW = "grid h-[63.2px] grid-cols-[554px_389px_417px_489px_600px] items-center text-center";

export default function App() {
  return (
    <div className="h-[1825px] w-[2487px] overflow-hidden bg-[#0d1823] font-['Open_Sans','Noto_Sans',sans-serif] text-[24.6px] tracking-[-0.5px] text-white">
      <header className="flex h-[84px] items-center bg-[#051f2b] pb-[8px] pl-[29px] text-[31px] font-semibold tracking-[-0.4px]">
        Thiago Suzuki
      </header>

      <main className="pl-[29px] pr-2">
        <div className="flex h-[141px] items-center justify-between">
          <div className="flex items-center pt-[4px] tracking-[-0.6px]">
            <span className="w-[151px]">Lista</span>
            <span className="w-[258px]">
              <Radio checked label="Rastreados" />
            </span>
            <Radio label="Outros" />
          </div>
          <div className="flex gap-[13px]">
            <div className="flex h-[65px] w-[345px] items-center rounded-[12px] border border-[#465262] bg-[#1f2937] pl-[25px] pt-[4px] text-[#8c9097]">
              Buscar por placa ou frota
            </div>
            <div className="flex h-[65px] w-[202px] items-center justify-center rounded-[12px] bg-[#3598e2] pt-[4px] font-semibold tracking-[-0.1px]">
              Novo
            </div>
          </div>
        </div>

        <section className="h-[789px] rounded-[18px] bg-[#02141f] pl-[25px] pt-[25px]">
          <h2 className="h-[69px] pt-[3px] text-[27.8px] leading-[40px] tracking-[-0.7px]">Mapa rastreador</h2>
          <TrackerMap />
        </section>

        <section className="relative mt-[38px] h-[632px] overflow-hidden rounded-[12px] border border-[#3f4d59] bg-[#02141f] pt-[2px]">
          <div className={ROW + " font-bold text-[#d1d5dc]"}>
            <span>Placa</span>
            <span>Frota</span>
            <span>Tipo</span>
            <span>Modelo</span>
            <span>Status</span>
          </div>
          {ROWS.map(([placa, frota, modelo]) => (
            <div key={placa} className={ROW}>
              <span>{placa}</span>
              <span>{frota}</span>
              <span>Motor</span>
              <span>{modelo}</span>
              <span>Em viagem</span>
            </div>
          ))}
          <div className="absolute right-[6px] top-[24px] h-[519px] w-[4px] rounded-full bg-[#979797]" />
        </section>

        <div className="-ml-[6px] mt-[56px] flex h-[57px] w-[57px] items-center justify-center rounded-full border-2 border-[#222326] bg-[#050506] shadow-[0_4px_14px_rgba(0,0,0,0.3)]">
          <svg width="24" height="26" viewBox="0 0 24 26" fill="none" strokeWidth="2.9">
            <defs>
              <linearGradient id="nDiag" x1="0" y1="0" x2="0" y2="1">
                <stop offset="0.65" stopColor="#fff" />
                <stop offset="1" stopColor="#fff" stopOpacity="0.1" />
              </linearGradient>
              <linearGradient id="nBar" x1="0" y1="0" x2="0" y2="1">
                <stop offset="0.2" stopColor="#fff" />
                <stop offset="1" stopColor="#fff" stopOpacity="0" />
              </linearGradient>
            </defs>
            <path d="M3.4 22.4V4" stroke="#fff" />
            <path d="M3.4 4 20 25.2" stroke="url(#nDiag)" />
            <rect x="17.3" y="4" width="2.9" height="13.5" fill="url(#nBar)" />
          </svg>
        </div>
      </main>
    </div>
  );
}
